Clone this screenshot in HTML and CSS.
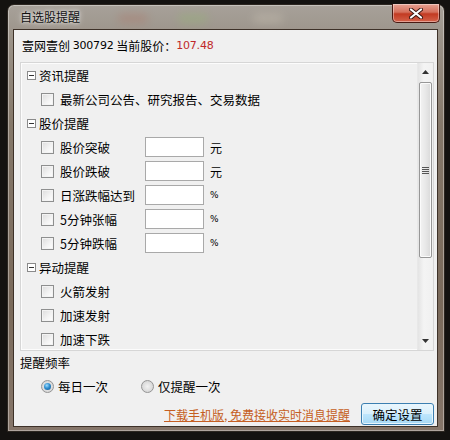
FILE: index.html
```html
<!DOCTYPE html>
<html lang="zh-CN">
<head>
<meta charset="utf-8">
<title>自选股提醒</title>
<link rel="stylesheet" href="styles.css">
</head>
<body>
<div class="window">
  <div class="titlebar">
    <span class="title">自选股提醒</span>
    <span class="blob b1"></span><span class="blob b2"></span><span class="blob b3"></span>
    <button class="close" aria-label="关闭">
      <svg width="14" height="11" viewBox="0 0 14 11"><path d="M2 1.5 L12 9.5 M12 1.5 L2 9.5" stroke="#3a1510" stroke-width="4" stroke-linecap="round"/><path d="M2 1.5 L12 9.5 M12 1.5 L2 9.5" stroke="#fff" stroke-width="2.2" stroke-linecap="round"/></svg>
    </button>
  </div>
  <div class="client">
    <div class="stock">壹网壹创 <span class="num">300792</span> 当前股价：<span class="num price">107.48</span></div>
    <div class="panel">
      <div class="tree">
        <div class="group"><span class="exp"></span>资讯提醒</div>
        <div class="item"><span class="cb"></span><span class="lbl">最新公司公告、研究报告、交易数据</span></div>
        <div class="group"><span class="exp"></span>股价提醒</div>
        <div class="item"><span class="cb"></span><span class="lbl fixed">股价突破</span><span class="inp"></span><span class="unit">元</span></div>
        <div class="item"><span class="cb"></span><span class="lbl fixed">股价跌破</span><span class="inp"></span><span class="unit">元</span></div>
        <div class="item"><span class="cb"></span><span class="lbl fixed">日涨跌幅达到</span><span class="inp"></span><span class="unit pct">%</span></div>
        <div class="item"><span class="cb"></span><span class="lbl fixed">5分钟张幅</span><span class="inp"></span><span class="unit pct">%</span></div>
        <div class="item"><span class="cb"></span><span class="lbl fixed">5分钟跌幅</span><span class="inp"></span><span class="unit pct">%</span></div>
        <div class="group"><span class="exp"></span>异动提醒</div>
        <div class="item"><span class="cb"></span><span class="lbl">火箭发射</span></div>
        <div class="item"><span class="cb"></span><span class="lbl">加速发射</span></div>
        <div class="item"><span class="cb"></span><span class="lbl">加速下跌</span></div>
      </div>
      <div class="scrollbar">
        <div class="arrow up"><svg width="7" height="4" viewBox="0 0 7 4"><path d="M0 4 L3.5 0 L7 4 Z" fill="#333"/></svg></div>
        <div class="track">
          <div class="thumb"><span class="grip"></span></div>
        </div>
        <div class="arrow down"><svg width="7" height="4" viewBox="0 0 7 4"><path d="M0 0 L3.5 4 L7 0 Z" fill="#333"/></svg></div>
      </div>
    </div>
    <div class="freq">提醒频率</div>
    <div class="radios">
      <label class="radio"><span class="rb on"></span>每日一次</label>
      <label class="radio"><span class="rb"></span>仅提醒一次</label>
    </div>
    <div class="footer">
      <a class="link" href="#">下载手机版, 免费接收实时消息提醒</a>
      <button class="ok">确定设置</button>
    </div>
  </div>
</div>
</body>
</html>
```

FILE: styles.css
```css
* { box-sizing: border-box; }
html, body { margin: 0; padding: 0; }
body {
  width: 450px;
  height: 440px;
  overflow: hidden;
  background: #141210;
  padding: 4px 0 0 7px;
  font-family: "Noto Sans CJK SC", "Noto Sans", sans-serif;
  font-size: 12px;
  color: #000;
}
.window {
  width: 438px;
  height: 428px;
  border: 1px solid #2c2620;
  border-radius: 7px 7px 0 0;
  background: linear-gradient(180deg, #a7a199 0px, #9c948a 30px, #85786a 120px, #7a6a5b 300px, #86766a 428px);
  padding: 0 6px 4px 5px;
  display: flex;
  flex-direction: column;
  box-shadow: inset 0 0 0 1px rgba(255,255,255,0.35);
}
.titlebar {
  height: 26px;
  position: relative;
  display: flex;
  align-items: center;
  padding-left: 7px;
}
.title {
  font-size: 12px;
  color: #111;
  text-shadow: 0 0 6px rgba(255,255,255,0.8), 0 0 3px rgba(255,255,255,0.7);
  position: relative;
  z-index: 1;
  margin-top: -1px;
}
.blob {
  position: absolute;
  top: 9px;
  height: 9px;
  border-radius: 6px;
  filter: blur(4px);
  opacity: 0.3;
}
.b1 { left: 105px; width: 30px; background: #b06a5a; }
.b2 { left: 165px; width: 30px; background: #8fbf6a; }
.b3 { left: 240px; width: 30px; background: #d8d0c0; }
.close {
  position: absolute;
  right: -2px;
  top: -1px;
  width: 48px;
  height: 19px;
  border: 1px solid #4a1a12;
  border-top: none;
  border-radius: 0 0 5px 5px;
  background: linear-gradient(180deg, #e8a293 0%, #d5705c 45%, #c23a22 55%, #d5624a 100%);
  box-shadow: inset 0 0 0 1px rgba(255,255,255,0.4);
  display: flex;
  align-items: center;
  justify-content: center;
  padding: 0;
}
.client {
  flex: 1;
  background: #f0f0f0;
  border: 1px solid #3d3128;
  display: flex;
  flex-direction: column;
  padding: 0 3px 0 6px;
}
.stock {
  height: 18px;
  line-height: 18px;
  margin-top: 7px;
  padding-left: 2px;
  display: flex;
  align-items: center;
  white-space: pre;
}
.num {
  font-family: "DejaVu Sans", sans-serif;
  font-size: 11px;
  letter-spacing: -0.2px;
}
.price { color: #c0282a; }
.panel {
  margin-top: 7px;
  height: 289px;
  border: 1px solid #d6d6d6;
  box-shadow: inset 0 0 0 1px #fcfcfc;
  display: flex;
  overflow: hidden;
}
.tree {
  flex: 1;
  overflow: hidden;
  padding-left: 6px;
}
.group, .item {
  height: 24px;
  display: flex;
  align-items: center;
  white-space: nowrap;
}
.group { font-size: 12.5px; }
.exp {
  width: 9px;
  height: 9px;
  border: 1px solid #8a8a8a;
  background: #fff;
  margin-right: 3px;
  position: relative;
}
.exp::after {
  content: "";
  position: absolute;
  left: 1px;
  right: 1px;
  top: 3px;
  height: 1px;
  background: #333;
}
.item { padding-left: 14px; }
.cb {
  width: 13px;
  height: 13px;
  border: 1px solid #8e8f8f;
  background: linear-gradient(135deg, #dcdcdc 0%, #f4f4f4 60%, #fff 100%);
  box-shadow: inset 0 0 0 1px #f3f3f3;
  margin-right: 6px;
  flex: none;
}
.lbl { font-size: 12.5px; }
.lbl.fixed { width: 85px; }
.inp {
  width: 59px;
  height: 20px;
  border: 1px solid #a9a9a9;
  background: #fff;
  flex: none;
}
.unit { margin-left: 6px; font-size: 12px; }
.unit.pct { font-family: "DejaVu Sans", sans-serif; font-size: 9px; }
.scrollbar {
  width: 16px;
  display: flex;
  flex-direction: column;
  background: linear-gradient(90deg, #e4e4e4, #f4f4f4 40%, #f0f0f0);
  border-left: 1px solid #e8e8e8;
}
.arrow {
  height: 18px;
  display: flex;
  align-items: center;
  justify-content: center;
}
.track {
  flex: 1;
  padding: 1px 1px 0 1px;
}
.thumb {
  height: 176px;
  border: 1px solid #979797;
  border-radius: 2px;
  background: linear-gradient(90deg, #f3f3f3, #e8e8e8 50%, #d9d9d9);
  box-shadow: inset 0 0 0 1px #fbfbfb;
  display: flex;
  align-items: center;
  justify-content: center;
}
.grip {
  width: 7px;
  height: 7px;
  background: repeating-linear-gradient(180deg, #555 0 1px, transparent 1px 2px);
}
.freq {
  margin-top: 4px;
  height: 16px;
  line-height: 16px;
  padding-left: 0;
  font-size: 12.5px;
}
.radios {
  display: flex;
  height: 22px;
  align-items: center;
  margin-top: 4px;
  padding-left: 21px;
  gap: 33px;
  font-size: 12.5px;
}
.radio { display: flex; align-items: center; }
.rb {
  width: 13px;
  height: 13px;
  border-radius: 50%;
  border: 1px solid #949494;
  background: radial-gradient(circle, #f2f2f2 0, #d8d8d8 70%, #c8c8c8 100%);
  margin-right: 4px;
  position: relative;
}
.rb.on::after {
  content: "";
  position: absolute;
  left: 2px;
  top: 2px;
  width: 7px;
  height: 7px;
  border-radius: 50%;
  background: radial-gradient(circle at 40% 35%, #9fdcff 0, #2f8fd0 45%, #124f8a 100%);
}
.footer {
  display: flex;
  align-items: center;
  justify-content: flex-end;
  margin-top: 5px;
  height: 24px;
  gap: 11px;
  padding-right: 0;
}
.link {
  color: #c55e22;
  font-size: 12px;
  text-decoration: underline;
}
.ok {
  width: 73px;
  height: 22px;
  border: 1px solid #3c7fb1;
  border-radius: 3px;
  background: linear-gradient(180deg, #eaf6fd 0%, #d9f0fc 50%, #bee6fd 51%, #a7d9f5 100%);
  box-shadow: inset 0 0 0 1px #e8f6fd;
  font-family: "Noto Sans CJK SC", sans-serif;
  font-size: 12.5px;
  color: #000;
  padding: 0;
}
```
